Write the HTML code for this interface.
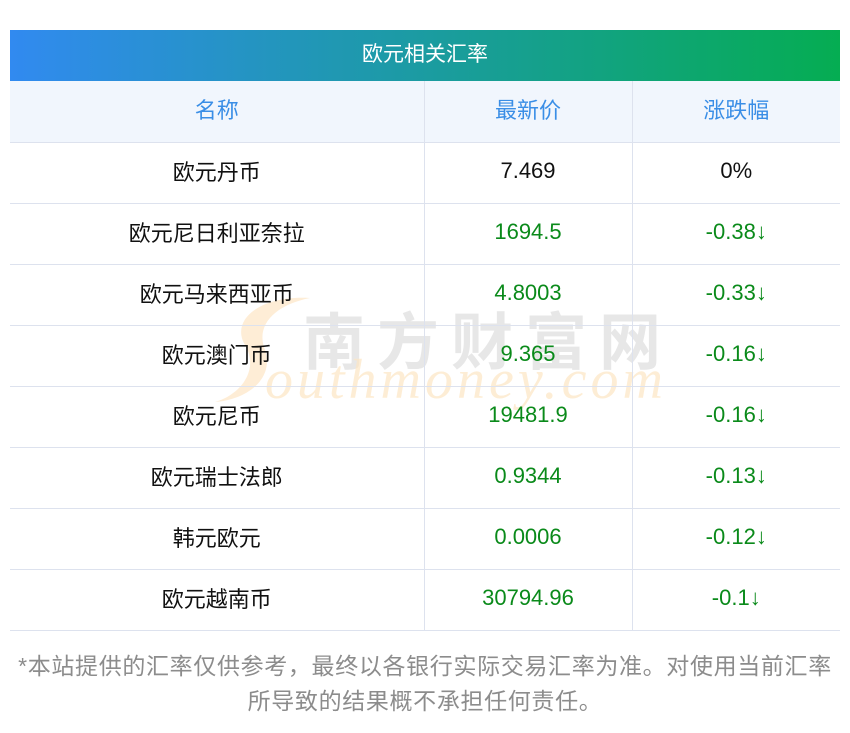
<!DOCTYPE html>
<html><head><meta charset="utf-8"><style>
*{margin:0;padding:0;box-sizing:border-box}
body{width:850px;height:733px;background:#fff;font-family:"Liberation Sans","Noto Sans CJK SC",sans-serif;position:relative;overflow:hidden}
.hd{position:absolute;left:10px;top:30px;width:830px;height:51px;background:linear-gradient(90deg,#318af0,#05ad52);color:#fff;font-size:21px;text-align:center;line-height:49px}
table{position:absolute;left:10px;top:81px;width:830px;border-collapse:collapse;font-size:22px}
td{height:61px;text-align:center;border-bottom:1px solid #dde2ee;border-right:1px solid #dde2ee;color:#111;padding-bottom:4px}
td:last-child{border-right:none}
tr.h td{background:#f1f6fd;color:#3a8ee6;height:61px}
.g{color:#0a8a1a}
.wm{position:absolute;pointer-events:none}
.ft{position:absolute;left:0;top:649px;width:850px;text-align:center;color:#8c8c8c;font-size:23px;line-height:35px;letter-spacing:0.65px;white-space:nowrap}
</style></head><body>
<div class="hd">欧元相关汇率</div>
<svg class="wm" style="left:200px;top:290px" width="140" height="120"><path d="M110 8 C60 5 30 30 45 55 C60 80 40 105 15 112 C45 110 75 90 65 60 C55 35 75 15 110 8Z" fill="#fde6c4" opacity="0.7"/></svg>
<div class="wm" style="left:303px;top:292px;font-size:62px;color:#d8d8d8;opacity:.6;letter-spacing:12px;font-weight:bold">南方财富网</div>
<div class="wm" style="left:265px;top:348px;font-size:56px;color:#fde6c4;opacity:.7;font-style:italic;font-family:'Liberation Serif',serif;letter-spacing:4px">outhmoney.com</div>
<table>
<colgroup><col style="width:414px"><col style="width:208px"><col style="width:208px"></colgroup>
<tr class="h"><td>名称</td><td>最新价</td><td>涨跌幅</td></tr>
<tr><td>欧元丹币</td><td>7.469</td><td>0%</td></tr>
<tr><td>欧元尼日利亚奈拉</td><td class="g">1694.5</td><td class="g">-0.38↓</td></tr>
<tr><td>欧元马来西亚币</td><td class="g">4.8003</td><td class="g">-0.33↓</td></tr>
<tr><td>欧元澳门币</td><td class="g">9.365</td><td class="g">-0.16↓</td></tr>
<tr><td>欧元尼币</td><td class="g">19481.9</td><td class="g">-0.16↓</td></tr>
<tr><td>欧元瑞士法郎</td><td class="g">0.9344</td><td class="g">-0.13↓</td></tr>
<tr><td>韩元欧元</td><td class="g">0.0006</td><td class="g">-0.12↓</td></tr>
<tr><td>欧元越南币</td><td class="g">30794.96</td><td class="g">-0.1↓</td></tr>
</table>
<div class="ft">*本站提供的汇率仅供参考，最终以各银行实际交易汇率为准。对使用当前汇率<br>所导致的结果概不承担任何责任。</div>
</body></html>
